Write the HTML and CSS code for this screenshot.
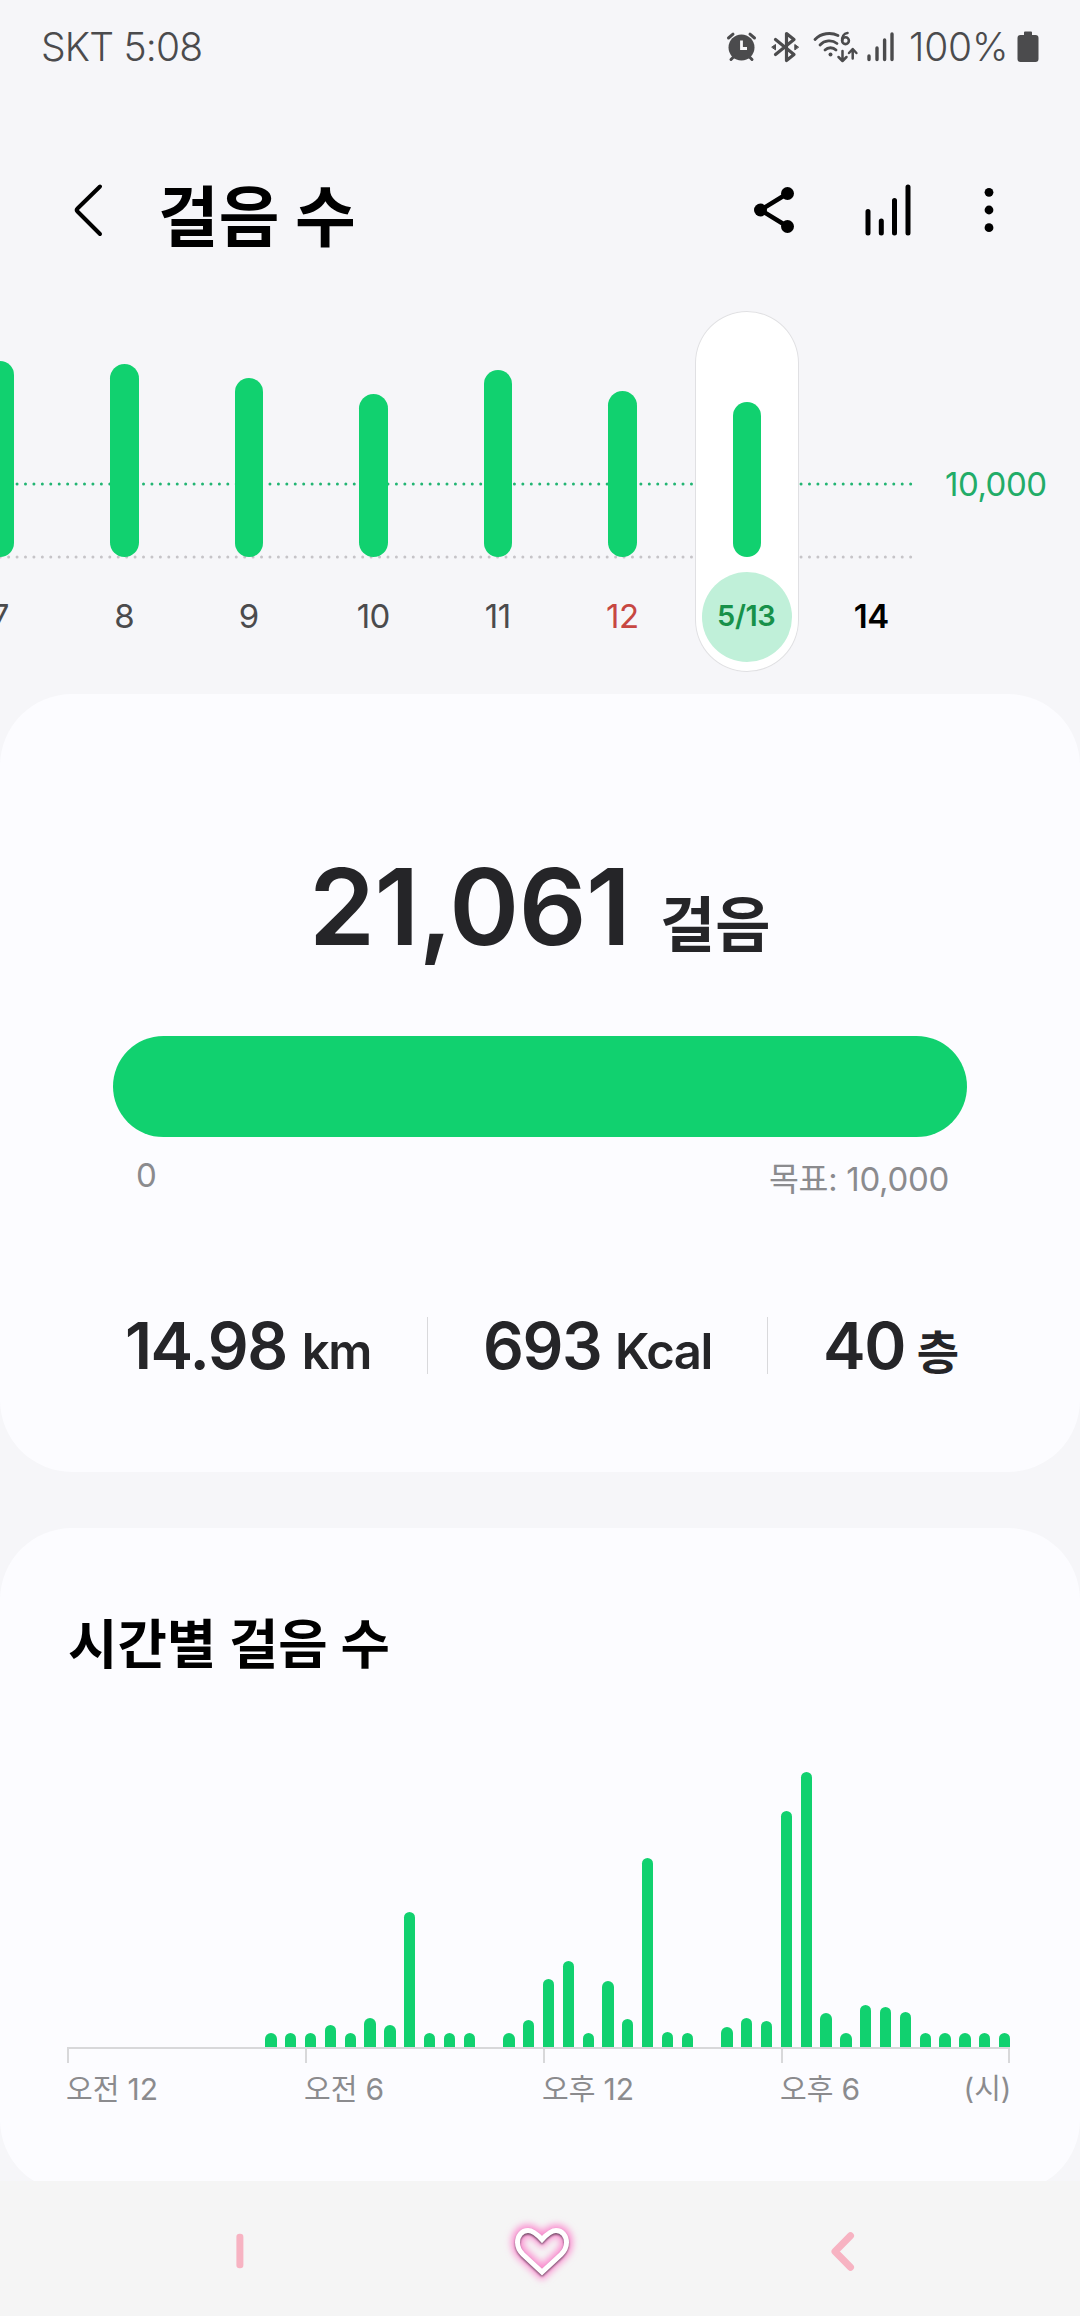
FILE: index.html
```html
<!DOCTYPE html>
<html lang="ko">
<head>
<meta charset="utf-8">
<title>걸음 수</title>
<link rel="stylesheet" href="styles.css">
</head>
<body>
<div class="screen">
  <header class="status">
    <span class="status-text carrier">SKT 5:08</span>
    <svg class="status-icons" width="172" height="40" viewBox="724 28 172 40" fill="none" stroke="#4b4b4d" stroke-linecap="round" stroke-linejoin="round">
      <circle cx="742.5" cy="48.5" r="13" fill="#4b4b4d" stroke="none"/>
      <path d="M729.5 39l4.5-3.8M755.5 39l-4.500-3.800M732 60.500l3-3M753 60.500l-3-3" stroke-width="3"/>
      <path d="M742.500 41.500v8h5.500" stroke="#f6f6f9" stroke-width="2.800" stroke-linecap="butt" stroke-linejoin="miter"/>
      <path d="M776.500 40.500l18.500 15-7.500 6v-27l7.500 6-18.500 15" stroke-width="3.200"/>
      <path d="M773 48l3.500-2.500v5zM799.300 48l-3.500-2.500v5z" fill="#4b4b4d" stroke-width="1"/>
      <path d="M816 40.500c6-6.500 16-7.500 23-4M821 46c4.500-4.800 12-5.500 17-1.500M826 51c3-3 8-3 11 0" stroke-width="2.800"/>
      <circle cx="831.500" cy="55.600" r="2" fill="#4b4b4d" stroke="none"/>
      <path d="M848.500 34c-4 .5-5.500 4-5.300 7.500" stroke-width="2.600"/>
      <circle cx="846.500" cy="41.700" r="3.400" stroke-width="2.600"/>
      <path d="M843.500 52v9M839.500 58l4 4 4-4M853.700 59.500v-9M850 54l3.700-4 3.700 4" stroke-width="2.500"/>
      <path d="M870 57v3.500M878 49v11.500M885.600 41v19.500M893 35v25.500" stroke-width="3.400"/>
    </svg>
    <span class="status-text percent">100%</span>
    <svg class="battery" width="22" height="32" viewBox="0 0 22 32" fill="#4b4b4d">
      <path d="M7 1.500q0-1 1-1h6q1 0 1 1V4h3.500q3 0 3 3v21q0 3-3 3h-15q-3 0-3-3V7q0-3 3-3H7z"/>
    </svg>
  </header>

  <nav class="toolbar">
    <svg class="back" width="32" height="56" viewBox="72 182 32 56" fill="none" stroke="#000" stroke-width="4" stroke-linecap="round" stroke-linejoin="round">
      <path d="M100 186.500L77.500 208.500q-1.500 1.500 0 3L100 234"/>
    </svg>
    <h1 class="title">걸음 수</h1>
    <svg class="share" width="44" height="50" viewBox="752 185 44 50">
      <path d="M787.500 193.500l-27 16.500 27 16.500" fill="none" stroke="#000" stroke-width="4.600"/>
      <circle cx="760.500" cy="210" r="6.500"/><circle cx="787.500" cy="193.500" r="6.500"/><circle cx="787.500" cy="226.500" r="6.500"/>
    </svg>
    <svg class="trend" width="46" height="52" viewBox="865 184 46 52" stroke="#000" stroke-width="5" stroke-linecap="round">
      <path d="M868 211.500v21.500M881.300 221v12M894.500 200.500v32.500M908 187v46"/>
    </svg>
    <svg class="more" width="10" height="46" viewBox="0 0 10 46">
      <circle cx="5" cy="5.300" r="4.400"/><circle cx="5" cy="23" r="4.400"/><circle cx="5" cy="40.700" r="4.400"/>
    </svg>
  </nav>

  <section class="week">
    <svg class="guides" width="920" height="80" viewBox="0 0 920 80" fill="none" stroke-width="3" stroke-linecap="round" stroke-dasharray="0 8.430">
      <path d="M.2 3H914" stroke="#22b573"/>
      <path d="M.2 76H914" stroke="#c6c4c8"/>
    </svg>
    <div class="days">
      <div class="day"><div class="track"><i class="bar" style="height:196px"></i></div><span class="date">7</span></div>
      <div class="day"><div class="track"><i class="bar" style="height:193px"></i></div><span class="date">8</span></div>
      <div class="day"><div class="track"><i class="bar" style="height:179px"></i></div><span class="date">9</span></div>
      <div class="day"><div class="track"><i class="bar" style="height:163px"></i></div><span class="date">10</span></div>
      <div class="day"><div class="track"><i class="bar" style="height:187px"></i></div><span class="date">11</span></div>
      <div class="day"><div class="track"><i class="bar" style="height:166px"></i></div><span class="date holiday">12</span></div>
      <div class="day selected"><div class="track"><i class="bar" style="height:155px"></i></div><span class="date">5/13</span></div>
      <div class="day"><div class="track"></div><span class="date today">14</span></div>
    </div>
    <span class="goal-line-label">10,000</span>
  </section>

  <section class="card summary">
    <div class="total"><span class="total-value">21,061</span><span class="total-unit">걸음</span></div>
    <div class="progress"></div>
    <div class="range"><span class="range-min">0</span><span class="range-max"><span class="range-word">목표:</span> 10,000</span></div>
    <div class="stats">
      <div class="stat distance"><b>14.98</b><span>km</span></div>
      <div class="stat energy"><b>693</b><span>Kcal</span></div>
      <div class="stat floors"><b>40</b><span class="ko">층</span></div>
    </div>
  </section>

  <section class="card hourly">
    <h2 class="heading">시간별 걸음 수</h2>
    <div class="bars" id="bars"></div>
    <div class="axis"><i></i><i></i><i></i><i></i></div>
    <div class="hours"><span>오전 <b>12</b></span><span>오전 <b>6</b></span><span>오후 <b>12</b></span><span>오후 <b>6</b></span><span class="unit">(시)</span></div>
  </section>

  <footer class="sysnav">
    <svg class="recents" width="8" height="36" viewBox="0 0 8 36"><rect x=".4" y=".8" width="7" height="34.400" rx="3.200" fill="#f7b3c2"/></svg>
    <svg class="home" width="80" height="80" viewBox="502 2210 80 80">
      <defs>
        <filter id="glow" x="-50%" y="-50%" width="200%" height="200%"><feGaussianBlur stdDeviation="3.800"/></filter>
        <filter id="edge" x="-50%" y="-50%" width="200%" height="200%"><feGaussianBlur stdDeviation=".9"/></filter>
        <path id="heart" d="M542 2239.500C536 2233 532 2230.500 528 2230.500C521.500 2230.500 517.500 2236 517.500 2242.500C517.500 2247 519 2250.500 523 2254.500L542 2272L561 2254.500C565 2250.500 566.500 2247 566.500 2242.500C566.500 2236 562.500 2230.500 556 2230.500C552 2230.500 548 2233 542 2239.500Z"/>
      </defs>
      <g fill="none" stroke-linejoin="miter">
        <use href="#heart" stroke="#fb8fd0" stroke-width="12" filter="url(#glow)"/>
        <use href="#heart" stroke="#6b4560" stroke-width="4.600" filter="url(#edge)" transform="translate(0 1.600)"/>
        <use href="#heart" stroke="#fff" stroke-width="5"/>
      </g>
    </svg>
    <svg class="sysback" width="26" height="42" viewBox="830 2231 26 42"><path d="M850.500 2235.700L835 2251.500L850.500 2267.300" fill="none" stroke="#f7b3c2" stroke-width="7" stroke-linecap="round" stroke-linejoin="round"/></svg>
  </footer>
</div>
<script src="bars.js"></script>
</body>
</html>
```
FILE: styles.css
```css
* { box-sizing: border-box; }
body { margin: 0; background: #f6f6f9; font-family: Inter, "Noto Sans CJK KR", sans-serif; color: #000; }
svg { display: block; flex: none; }
.screen { width: 1080px; height: 2316px; overflow: hidden; display: flex; flex-direction: column; }

.status { height: 95px; display: flex; align-items: center; padding: 0 41px 1px 41px; flex: none; }
.status-text { font-size: 39px; font-weight: 350; color: #4b4b4d; line-height: 46px; letter-spacing: -.8px; white-space: nowrap; }
.carrier { flex: 1; }
.status-icons { margin-right: 14px; }
.percent { width: 105px; letter-spacing: -.2px; }
.battery { margin-left: 3px; }

.toolbar { height: 216px; display: flex; align-items: flex-start; padding: 87px 86px 0 72px; flex: none; }
.title { margin: -5px 0 0 54px; flex: 1; font-size: 66px; line-height: 80px; font-weight: 700; }
.share { margin-top: 3px; }
.trend { margin: 2px 0 0 69px; }
.more { margin: 5px 0 0 73px; }

.week { position: relative; height: 383px; display: flex; flex: none; }
.guides { position: absolute; left: 0; top: 170px; }
.days { position: relative; display: flex; margin-left: -62.500px; flex: none; }
.day { width: 124.500px; display: flex; flex-direction: column; align-items: center; }
.track { height: 246px; display: flex; align-items: flex-end; }
.bar { width: 28.500px; border-radius: 15px; background: #11d16f; }
.date { margin-top: 15px; width: 90px; height: 90px; line-height: 88px; text-align: center; font-size: 33px; letter-spacing: -.5px; color: #4b4b4d; }
.holiday { color: #c74742; }
.today { color: #000; font-weight: 600; }
.selected { width: 104.500px; height: 361px; margin: 0 10px; background: #fff; border-radius: 53px; box-shadow: inset 0 0 0 1px #e0e0e3; }
.selected .date { border-radius: 50%; background: #c0f0d9; color: #17914a; font-size: 29px; font-weight: 600; letter-spacing: -.4px; text-indent: -1px; }
.goal-line-label { margin: 153px 0 0 11.500px; font-size: 33px; line-height: 40px; letter-spacing: -.5px; color: #22ac68; }

.card { background: #fcfcff; border-radius: 72px; flex: none; }
.summary { height: 777.500px; padding: 153px 113px 0; }
.total { display: flex; height: 189px; padding-left: 196px; color: #252528; white-space: nowrap; }
.total-value { width: 351px; font-size: 106px; line-height: 120px; font-weight: 600; letter-spacing: -.5px; }
.total-unit { font-size: 60px; line-height: 156px; font-weight: 700; }
.progress { height: 101px; border-radius: 51px; background: #11d16f; }
.range { display: flex; justify-content: space-between; padding: 18px 18px 0 23px; color: #8b8b8e; font-size: 33px; line-height: 40px; }
.range-max { padding-top: 4px; letter-spacing: -.3px; }
.range-word { font-size: 32.500px; }
.stats { display: flex; margin: 116.500px 0 0; color: #252528; }
.stat { display: flex; align-items: baseline; height: 57px; line-height: 57px; white-space: nowrap; }
.stat b { font-size: 64px; font-weight: 600; letter-spacing: -1.500px; }
.stat span { font-size: 49px; font-weight: 600; letter-spacing: -1.400px; }
.distance { width: 314px; padding-left: 12px; }
.distance span { margin-left: 15px; }
.energy { width: 341px; padding-left: 55px; border: solid #d9d9dc; border-width: 0 1px; }
.energy span { margin-left: 14px; }
.floors { padding-left: 55px; }
.floors .ko { font-size: 46px; font-weight: 700; margin-left: 12px; line-height: 54px; }

.hourly { height: 664px; margin-top: 56.500px; padding: 82px 69.600px 0 67px; }
.heading { margin: 0 0 0 1px; font-size: 53.700px; line-height: 70px; font-weight: 700; }
.bars { height: 367px; display: flex; align-items: flex-end; justify-content: space-between; }
.bars i { width: 11.300px; border-radius: 6px 6px 0 0; background: #11d16f; }
.axis { height: 15.500px; display: grid; grid-template-columns: 238px 238px 238px 1fr; border-top: 2.500px solid #d8d8da; }
.axis i { border-left: 2.500px solid #d8d8da; }
.axis i:last-child { border-right: 2.500px solid #d8d8da; }
.hours { display: grid; grid-template-columns: 238px 238px 238px 1fr auto; margin: 6px -1px 0; font-size: 29px; line-height: 40px; color: #8b8b8e; white-space: nowrap; }
.hours b { font-size: 30px; font-weight: 400; }

.sysnav { position: relative; margin-top: -11px; height: 135px; background: #f5f5f5; display: flex; align-items: flex-start; padding: 0 224px 0 236px; flex: none; }
.recents { margin-top: 52px; }
.home { margin: 29px 0 0 258px; }
.sysback { margin: 50px 0 0 248px; }
```
FILE: bars.js
```js
// Step bars, one per half hour of the day, heights in pixels.
const steps = [
  0, 0, 0, 0, 0, 0, 0, 0, 0, 0, 14, 14, 14, 22, 14, 29, 22, 135, 14, 14, 14, 0, 14, 27,
  68, 86, 14, 66, 28, 189, 15, 14, 0, 20, 29, 26, 236, 275, 34, 14, 42, 40, 35, 14, 14, 14, 14, 14
];
const holder = document.getElementById('bars');
for (const h of steps) {
  const bar = document.createElement('i');
  bar.style.height = h + 'px';
  holder.append(bar);
}
```
